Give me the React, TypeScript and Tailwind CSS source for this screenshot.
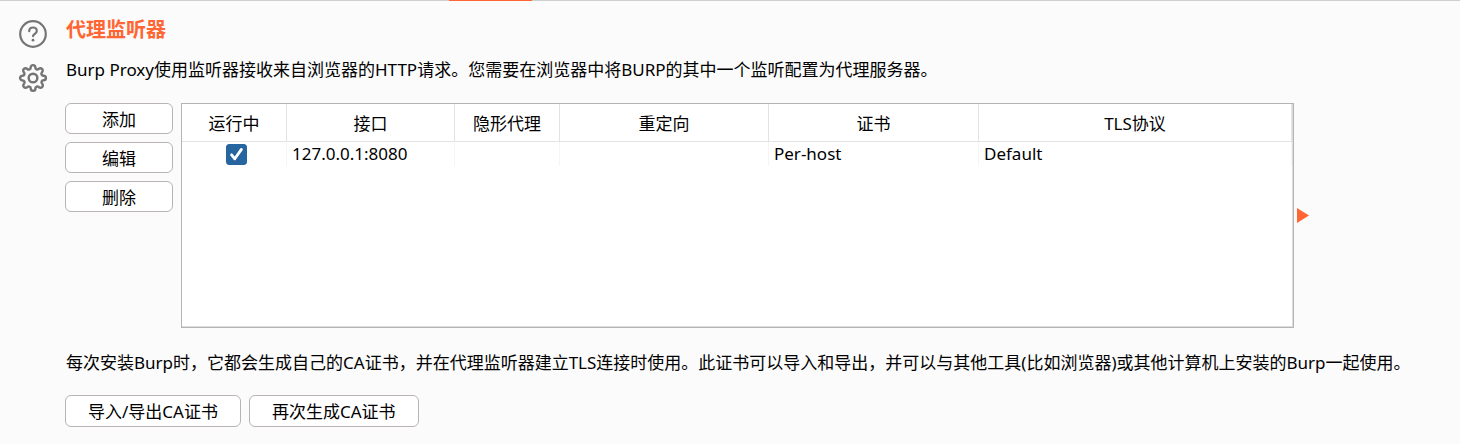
import { useState, type ReactNode } from 'react';

interface Listener {
  running: boolean;
  address: string;
  invisible: string;
  redirect: string;
  certificate: string;
  tls: string;
}

const columns = [
  { label: '运行中', width: 'w-[105px]' },
  { label: '接口', width: 'w-[168px]' },
  { label: '隐形代理', width: 'w-[105px]' },
  { label: '重定向', width: 'w-[209px]' },
  { label: '证书', width: 'w-[210px]' },
  { label: 'TLS协议', width: '' },
];

const initialListeners: Listener[] = [
  {
    running: true,
    address: '127.0.0.1:8080',
    invisible: '',
    redirect: '',
    certificate: 'Per-host',
    tls: 'Default',
  },
];

function HelpIcon() {
  return (
    <svg width="30" height="30" viewBox="0 0 30 30" fill="none" stroke="#757575" strokeWidth="2.2" strokeLinecap="round">
      <circle cx="15" cy="15" r="12.8" />
      <path d="M11.2 12.2C11.2 9.9 12.8 8.5 15 8.5s3.8 1.4 3.8 3.4c0 2.6-3.6 3-3.8 5.2" />
      <circle cx="15" cy="21.2" r="1.4" fill="#757575" stroke="none" />
    </svg>
  );
}

function GearIcon() {
  return (
    <svg width="30" height="30" viewBox="-0.8 -0.8 25.6 25.6" fill="none" stroke="#757575" strokeWidth="2.1" strokeLinecap="round" strokeLinejoin="round">
      <circle cx="12" cy="12" r="3.7" />
      <path d="M19.4 15a1.65 1.65 0 0 0 .33 1.82l.06.06a2 2 0 0 1 0 2.83 2 2 0 0 1-2.83 0l-.06-.06a1.65 1.65 0 0 0-1.82-.33 1.65 1.65 0 0 0-1 1.51V21a2 2 0 0 1-2 2 2 2 0 0 1-2-2v-.09A1.65 1.65 0 0 0 9 19.4a1.65 1.65 0 0 0-1.82.33l-.06.06a2 2 0 0 1-2.83 0 2 2 0 0 1 0-2.83l.06-.06a1.65 1.65 0 0 0 .33-1.82 1.65 1.65 0 0 0-1.51-1H3a2 2 0 0 1-2-2 2 2 0 0 1 2-2h.09A1.65 1.65 0 0 0 4.6 9a1.65 1.65 0 0 0-.33-1.82l-.06-.06a2 2 0 0 1 0-2.83 2 2 0 0 1 2.83 0l.06.06a1.65 1.65 0 0 0 1.82.33H9a1.65 1.65 0 0 0 1-1.51V3a2 2 0 0 1 2-2 2 2 0 0 1 2 2v.09a1.65 1.65 0 0 0 1 1.51 1.65 1.65 0 0 0 1.82-.33l.06-.06a2 2 0 0 1 2.83 0 2 2 0 0 1 0 2.83l-.06.06a1.65 1.65 0 0 0-.33 1.82V9a1.65 1.65 0 0 0 1.51 1H21a2 2 0 0 1 2 2 2 2 0 0 1-2 2h-.09a1.65 1.65 0 0 0-1.51 1z" />
    </svg>
  );
}

function Button({ children, className = '' }: { children: ReactNode; className?: string }) {
  return (
    <button type="button" className={`flex items-center justify-center rounded-md border border-[#b9b3b5] bg-white pt-0.5 ${className}`}>
      {children}
    </button>
  );
}

export default function App() {
  const [listeners, setListeners] = useState(initialListeners);

  const toggle = (index: number) => {
    setListeners(listeners.map((l, i) => (i === index ? { ...l, running: !l.running } : l)));
  };

  return (
    <div className="min-h-screen bg-[#fbfbfb] font-['Noto_Sans','Noto_Sans_CJK_SC',sans-serif] text-[17px] leading-6 text-black">
      <div className="h-px bg-[#cdd0d0]">
        <div className="ml-[449px] h-px w-[83px] bg-[#ff6633]" />
      </div>

      <div className="flex gap-[17px] pt-[17px] pl-[18px]">
        <div className="flex flex-col gap-[14px] pt-px">
          <button type="button" aria-label="帮助">
            <HelpIcon />
          </button>
          <button type="button" aria-label="设置">
            <GearIcon />
          </button>
        </div>

        <main className="min-w-0 flex-1">
          <h1 className="pl-px text-[20px] leading-6 font-bold text-[#ff6633]">代理监听器</h1>
          <p className="mt-4 pl-px">
            Burp Proxy使用监听器接收来自浏览器的HTTP请求。您需要在浏览器中将BURP的其中一个监听配置为代理服务器。
          </p>

          <div className="mt-[21px] flex pr-[151px]">
            <div className="mr-2 flex w-[108px] shrink-0 flex-col gap-2">
              <Button className="h-[31px]">添加</Button>
              <Button className="h-[31px]">编辑</Button>
              <Button className="h-[31px]">删除</Button>
            </div>

            <div className="h-[225px] min-w-0 flex-1 border border-[#b4b4b4] bg-white pr-px shadow-[inset_-1px_-1px_0_#dcdcdc]">
              <table className="w-full table-fixed border-separate border-spacing-0">
                <thead>
                  <tr>
                    {columns.map((col) => (
                      <th key={col.label} scope="col" className={`h-[38px] border-r border-b border-[#e3e3e3] p-0 pt-0.5 text-center font-normal ${col.width}`}>
                        {col.label}
                      </th>
                    ))}
                  </tr>
                </thead>
                <tbody>
                  {listeners.map((item, i) => (
                    <tr key={item.address} className="[&>td]:h-6 [&>td]:border-r [&>td]:border-[#f5f5f5] [&>td]:py-0 [&>td]:pr-0 [&>td]:pl-[5px]">
                      <td>
                        <label className="mx-auto grid w-[21px] place-items-center">
                          <input
                            type="checkbox"
                            aria-label="运行中"
                            checked={item.running}
                            onChange={() => toggle(i)}
                            className="peer col-start-1 row-start-1 size-[21px] appearance-none rounded-[3px] border border-[#26659f] bg-white checked:bg-[#26659f]"
                          />
                          <svg className="pointer-events-none invisible col-start-1 row-start-1 peer-checked:visible" width="21" height="21" viewBox="0 0 21 21" fill="none" stroke="#fff" strokeWidth="2.8" strokeLinecap="round" strokeLinejoin="round">
                            <path d="M5.6 10.8L8.8 14.8L15.4 5.4" />
                          </svg>
                        </label>
                      </td>
                      <td>{item.address}</td>
                      <td>{item.invisible}</td>
                      <td>{item.redirect}</td>
                      <td>{item.certificate}</td>
                      <td>{item.tls}</td>
                    </tr>
                  ))}
                </tbody>
              </table>
            </div>

            <svg className="ml-[3px] shrink-0 self-center" width="12" height="15" viewBox="0 0 12 15" fill="#ff6633">
              <path d="M0 0L12 7.5L0 15z" />
            </svg>
          </div>

          <p className="mt-[23px] pl-px">
            每次安装Burp时，它都会生成自己的CA证书，并在代理监听器建立TLS连接时使用。此证书可以导入和导出，并可以与其他工具(比如浏览器)或其他计算机上安装的Burp一起使用。
          </p>

          <div className="mt-5 flex gap-2 pb-4">
            <Button className="h-8 px-[22px]">导入/导出CA证书</Button>
            <Button className="h-8 px-[22px]">再次生成CA证书</Button>
          </div>
        </main>
      </div>
    </div>
  );
}
